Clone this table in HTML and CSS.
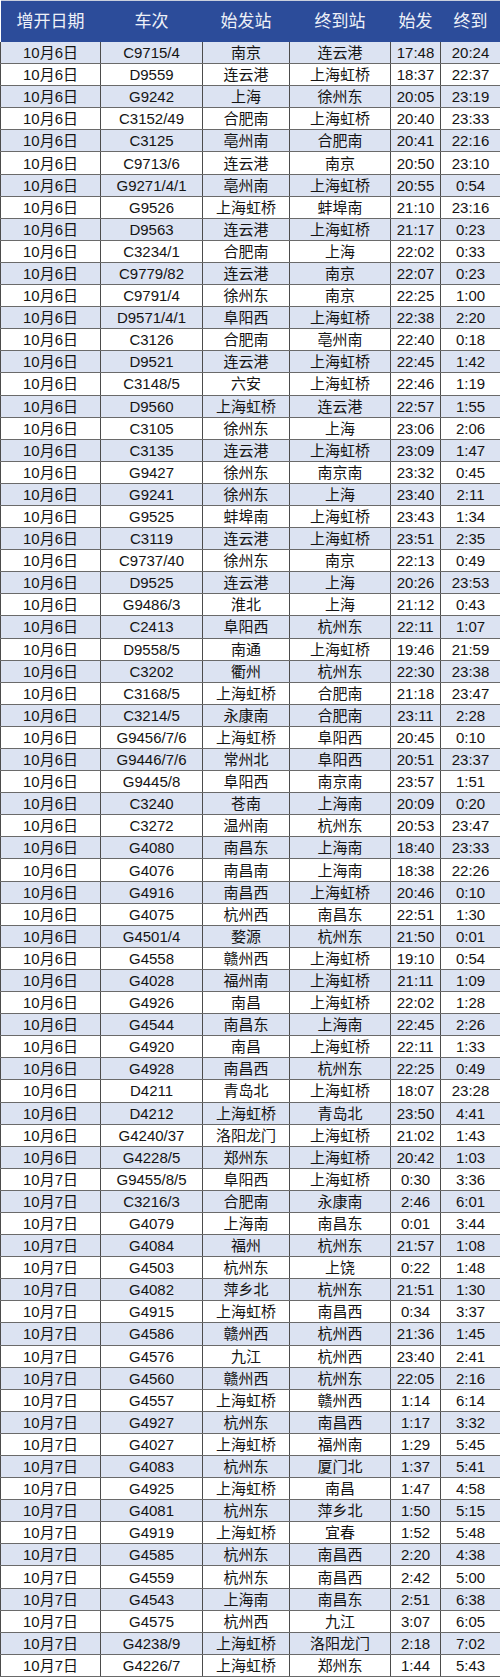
FILE: index.html
```html
<!DOCTYPE html>
<html lang="zh-CN">
<head>
<meta charset="utf-8">
<title>增开列车</title>
<link rel="stylesheet" href="styles.css">
</head>
<body>
<table class="tt">
<colgroup><col class="c1"><col class="c2"><col class="c3"><col class="c4"><col class="c5"><col class="c6"></colgroup>
<thead>
<tr><th>增开日期</th><th>车次</th><th>始发站</th><th>终到站</th><th>始发</th><th>终到</th></tr>
</thead>
<tbody>
<tr><td>10月6日</td><td>C9715/4</td><td>南京</td><td>连云港</td><td>17:48</td><td>20:24</td></tr>
<tr><td>10月6日</td><td>D9559</td><td>连云港</td><td>上海虹桥</td><td>18:37</td><td>22:37</td></tr>
<tr><td>10月6日</td><td>G9242</td><td>上海</td><td>徐州东</td><td>20:05</td><td>23:19</td></tr>
<tr><td>10月6日</td><td>C3152/49</td><td>合肥南</td><td>上海虹桥</td><td>20:40</td><td>23:33</td></tr>
<tr><td>10月6日</td><td>C3125</td><td>亳州南</td><td>合肥南</td><td>20:41</td><td>22:16</td></tr>
<tr><td>10月6日</td><td>C9713/6</td><td>连云港</td><td>南京</td><td>20:50</td><td>23:10</td></tr>
<tr><td>10月6日</td><td>G9271/4/1</td><td>亳州南</td><td>上海虹桥</td><td>20:55</td><td>0:54</td></tr>
<tr><td>10月6日</td><td>G9526</td><td>上海虹桥</td><td>蚌埠南</td><td>21:10</td><td>23:16</td></tr>
<tr><td>10月6日</td><td>D9563</td><td>连云港</td><td>上海虹桥</td><td>21:17</td><td>0:23</td></tr>
<tr><td>10月6日</td><td>C3234/1</td><td>合肥南</td><td>上海</td><td>22:02</td><td>0:33</td></tr>
<tr><td>10月6日</td><td>C9779/82</td><td>连云港</td><td>南京</td><td>22:07</td><td>0:23</td></tr>
<tr><td>10月6日</td><td>C9791/4</td><td>徐州东</td><td>南京</td><td>22:25</td><td>1:00</td></tr>
<tr><td>10月6日</td><td>D9571/4/1</td><td>阜阳西</td><td>上海虹桥</td><td>22:38</td><td>2:20</td></tr>
<tr><td>10月6日</td><td>C3126</td><td>合肥南</td><td>亳州南</td><td>22:40</td><td>0:18</td></tr>
<tr><td>10月6日</td><td>D9521</td><td>连云港</td><td>上海虹桥</td><td>22:45</td><td>1:42</td></tr>
<tr><td>10月6日</td><td>C3148/5</td><td>六安</td><td>上海虹桥</td><td>22:46</td><td>1:19</td></tr>
<tr><td>10月6日</td><td>D9560</td><td>上海虹桥</td><td>连云港</td><td>22:57</td><td>1:55</td></tr>
<tr><td>10月6日</td><td>C3105</td><td>徐州东</td><td>上海</td><td>23:06</td><td>2:06</td></tr>
<tr><td>10月6日</td><td>C3135</td><td>连云港</td><td>上海虹桥</td><td>23:09</td><td>1:47</td></tr>
<tr><td>10月6日</td><td>G9427</td><td>徐州东</td><td>南京南</td><td>23:32</td><td>0:45</td></tr>
<tr><td>10月6日</td><td>G9241</td><td>徐州东</td><td>上海</td><td>23:40</td><td>2:11</td></tr>
<tr><td>10月6日</td><td>G9525</td><td>蚌埠南</td><td>上海虹桥</td><td>23:43</td><td>1:34</td></tr>
<tr><td>10月6日</td><td>C3119</td><td>连云港</td><td>上海虹桥</td><td>23:51</td><td>2:35</td></tr>
<tr><td>10月6日</td><td>C9737/40</td><td>徐州东</td><td>南京</td><td>22:13</td><td>0:49</td></tr>
<tr><td>10月6日</td><td>D9525</td><td>连云港</td><td>上海</td><td>20:26</td><td>23:53</td></tr>
<tr><td>10月6日</td><td>G9486/3</td><td>淮北</td><td>上海</td><td>21:12</td><td>0:43</td></tr>
<tr><td>10月6日</td><td>C2413</td><td>阜阳西</td><td>杭州东</td><td>22:11</td><td>1:07</td></tr>
<tr><td>10月6日</td><td>D9558/5</td><td>南通</td><td>上海虹桥</td><td>19:46</td><td>21:59</td></tr>
<tr><td>10月6日</td><td>C3202</td><td>衢州</td><td>杭州东</td><td>22:30</td><td>23:38</td></tr>
<tr><td>10月6日</td><td>C3168/5</td><td>上海虹桥</td><td>合肥南</td><td>21:18</td><td>23:47</td></tr>
<tr><td>10月6日</td><td>C3214/5</td><td>永康南</td><td>合肥南</td><td>23:11</td><td>2:28</td></tr>
<tr><td>10月6日</td><td>G9456/7/6</td><td>上海虹桥</td><td>阜阳西</td><td>20:45</td><td>0:10</td></tr>
<tr><td>10月6日</td><td>G9446/7/6</td><td>常州北</td><td>阜阳西</td><td>20:51</td><td>23:37</td></tr>
<tr><td>10月6日</td><td>G9445/8</td><td>阜阳西</td><td>南京南</td><td>23:57</td><td>1:51</td></tr>
<tr><td>10月6日</td><td>C3240</td><td>苍南</td><td>上海南</td><td>20:09</td><td>0:20</td></tr>
<tr><td>10月6日</td><td>C3272</td><td>温州南</td><td>杭州东</td><td>20:53</td><td>23:47</td></tr>
<tr><td>10月6日</td><td>G4080</td><td>南昌东</td><td>上海南</td><td>18:40</td><td>23:33</td></tr>
<tr><td>10月6日</td><td>G4076</td><td>南昌南</td><td>上海南</td><td>18:38</td><td>22:26</td></tr>
<tr><td>10月6日</td><td>G4916</td><td>南昌西</td><td>上海虹桥</td><td>20:46</td><td>0:10</td></tr>
<tr><td>10月6日</td><td>G4075</td><td>杭州西</td><td>南昌东</td><td>22:51</td><td>1:30</td></tr>
<tr><td>10月6日</td><td>G4501/4</td><td>婺源</td><td>杭州东</td><td>21:50</td><td>0:01</td></tr>
<tr><td>10月6日</td><td>G4558</td><td>赣州西</td><td>上海虹桥</td><td>19:10</td><td>0:54</td></tr>
<tr><td>10月6日</td><td>G4028</td><td>福州南</td><td>上海虹桥</td><td>21:11</td><td>1:09</td></tr>
<tr><td>10月6日</td><td>G4926</td><td>南昌</td><td>上海虹桥</td><td>22:02</td><td>1:28</td></tr>
<tr><td>10月6日</td><td>G4544</td><td>南昌东</td><td>上海南</td><td>22:45</td><td>2:26</td></tr>
<tr><td>10月6日</td><td>G4920</td><td>南昌</td><td>上海虹桥</td><td>22:11</td><td>1:33</td></tr>
<tr><td>10月6日</td><td>G4928</td><td>南昌西</td><td>杭州东</td><td>22:25</td><td>0:49</td></tr>
<tr><td>10月6日</td><td>D4211</td><td>青岛北</td><td>上海虹桥</td><td>18:07</td><td>23:28</td></tr>
<tr><td>10月6日</td><td>D4212</td><td>上海虹桥</td><td>青岛北</td><td>23:50</td><td>4:41</td></tr>
<tr><td>10月6日</td><td>G4240/37</td><td>洛阳龙门</td><td>上海虹桥</td><td>21:02</td><td>1:43</td></tr>
<tr><td>10月6日</td><td>G4228/5</td><td>郑州东</td><td>上海虹桥</td><td>20:42</td><td>1:03</td></tr>
<tr><td>10月7日</td><td>G9455/8/5</td><td>阜阳西</td><td>上海虹桥</td><td>0:30</td><td>3:36</td></tr>
<tr><td>10月7日</td><td>C3216/3</td><td>合肥南</td><td>永康南</td><td>2:46</td><td>6:01</td></tr>
<tr><td>10月7日</td><td>G4079</td><td>上海南</td><td>南昌东</td><td>0:01</td><td>3:44</td></tr>
<tr><td>10月7日</td><td>G4084</td><td>福州</td><td>杭州东</td><td>21:57</td><td>1:08</td></tr>
<tr><td>10月7日</td><td>G4503</td><td>杭州东</td><td>上饶</td><td>0:22</td><td>1:48</td></tr>
<tr><td>10月7日</td><td>G4082</td><td>萍乡北</td><td>杭州东</td><td>21:51</td><td>1:30</td></tr>
<tr><td>10月7日</td><td>G4915</td><td>上海虹桥</td><td>南昌西</td><td>0:34</td><td>3:37</td></tr>
<tr><td>10月7日</td><td>G4586</td><td>赣州西</td><td>杭州西</td><td>21:36</td><td>1:45</td></tr>
<tr><td>10月7日</td><td>G4576</td><td>九江</td><td>杭州西</td><td>23:40</td><td>2:41</td></tr>
<tr><td>10月7日</td><td>G4560</td><td>赣州西</td><td>杭州东</td><td>22:05</td><td>2:16</td></tr>
<tr><td>10月7日</td><td>G4557</td><td>上海虹桥</td><td>赣州西</td><td>1:14</td><td>6:14</td></tr>
<tr><td>10月7日</td><td>G4927</td><td>杭州东</td><td>南昌西</td><td>1:17</td><td>3:32</td></tr>
<tr><td>10月7日</td><td>G4027</td><td>上海虹桥</td><td>福州南</td><td>1:29</td><td>5:45</td></tr>
<tr><td>10月7日</td><td>G4083</td><td>杭州东</td><td>厦门北</td><td>1:37</td><td>5:41</td></tr>
<tr><td>10月7日</td><td>G4925</td><td>上海虹桥</td><td>南昌</td><td>1:47</td><td>4:58</td></tr>
<tr><td>10月7日</td><td>G4081</td><td>杭州东</td><td>萍乡北</td><td>1:50</td><td>5:15</td></tr>
<tr><td>10月7日</td><td>G4919</td><td>上海虹桥</td><td>宜春</td><td>1:52</td><td>5:48</td></tr>
<tr><td>10月7日</td><td>G4585</td><td>杭州东</td><td>南昌西</td><td>2:20</td><td>4:38</td></tr>
<tr><td>10月7日</td><td>G4559</td><td>杭州东</td><td>南昌西</td><td>2:42</td><td>5:00</td></tr>
<tr><td>10月7日</td><td>G4543</td><td>上海南</td><td>南昌东</td><td>2:51</td><td>6:38</td></tr>
<tr><td>10月7日</td><td>G4575</td><td>杭州西</td><td>九江</td><td>3:07</td><td>6:05</td></tr>
<tr><td>10月7日</td><td>G4238/9</td><td>上海虹桥</td><td>洛阳龙门</td><td>2:18</td><td>7:02</td></tr>
<tr><td>10月7日</td><td>G4226/7</td><td>上海虹桥</td><td>郑州东</td><td>1:44</td><td>5:43</td></tr>
</tbody>
</table>
</body>
</html>
```

FILE: styles.css
```css
html, body {
  margin: 0;
  padding: 0;
  background: #ffffff;
}

.tt {
  width: 500px;
  table-layout: fixed;
  border-collapse: collapse;
  font-family: "Liberation Sans", "Noto Sans CJK SC", sans-serif;
  color: #141414;
  border-top: 1px solid #c9cfdd;
}

.c1 { width: 100px; }
.c2 { width: 102px; }
.c3 { width: 87px; }
.c4 { width: 101px; }
.c5 { width: 50px; }
.c6 { width: 60px; }

.tt th {
  height: 41px;
  padding: 0;
  background: #2c4c9a;
  color: #eef1f8;
  font-weight: normal;
  font-size: 17px;
  line-height: 20px;
  text-align: center;
  border: none;
}

.tt td {
  height: 21.1px;
  padding: 0;
  font-size: 15px;
  line-height: 17px;
  text-align: center;
  white-space: nowrap;
  overflow: hidden;
  border-left: 1px solid #4c4c4c;
  border-bottom: 1px solid #6a6a6a;
}

.tt td:last-child {
  border-right: 1px solid #4c4c4c;
}

.tt tbody tr:nth-child(odd) td {
  background: #dce3f2;
}

.tt tbody tr:nth-child(even) td {
  background: #ffffff;
}
```
